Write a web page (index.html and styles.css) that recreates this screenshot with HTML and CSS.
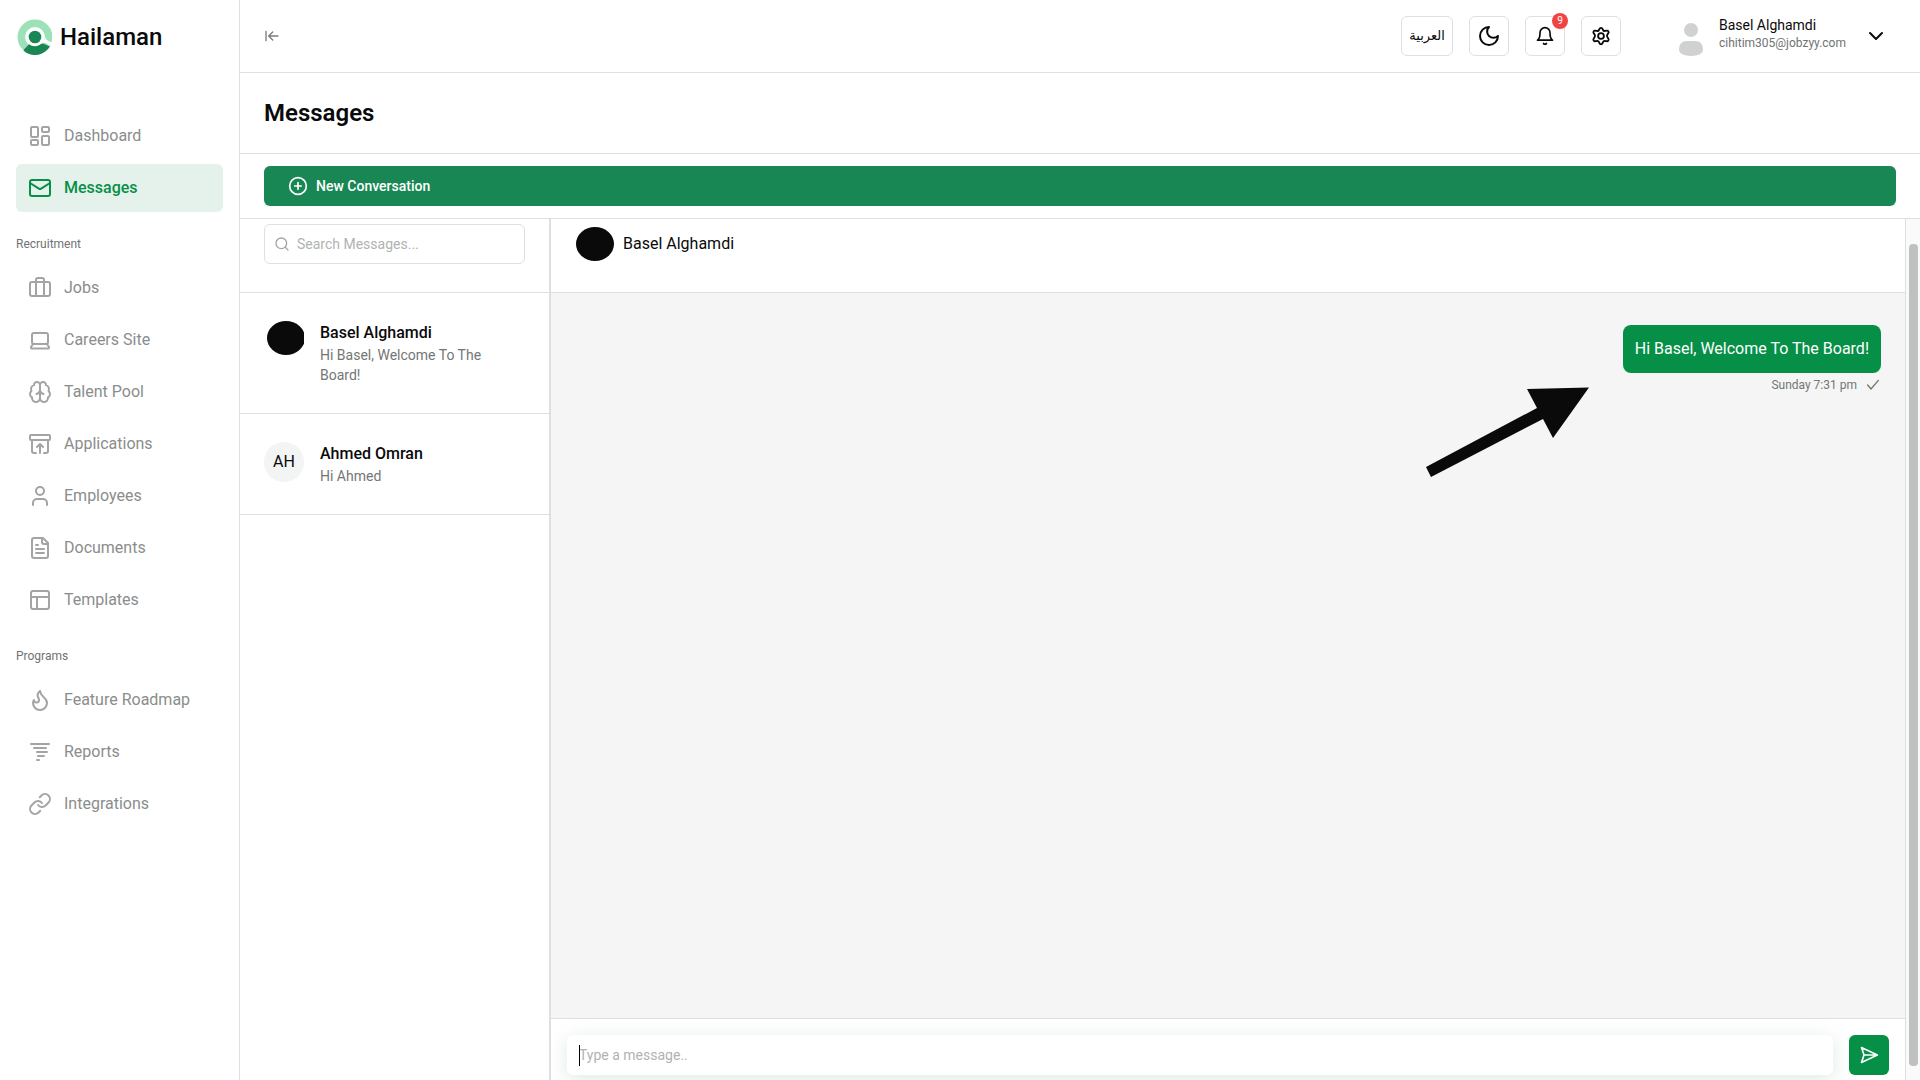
FILE: index.html
```html
<!DOCTYPE html>
<html lang="en">
<head>
  <meta charset="UTF-8">
  <meta name="viewport" content="width=device-width, initial-scale=1.0">
  <title>Hailaman - Messages</title>
  <link rel="stylesheet" href="styles.css">
</head>
<body>
  <div class="app">
    <aside class="sidebar">
      <a class="brand" href="#">
        <svg class="brand-logo" viewBox="-1 0 36 36">
          <circle cx="18" cy="18" r="13.7" fill="none" stroke="#9de1b9" stroke-width="7.6"/>
          <path d="M6.3 31.2 12 25.2c3.400 2.700 9 2.600 12.300-.4.900-.7 1.700-.4 2.800.2l5.800 2.500C26 38.200 13 38.200 6.300 31.200Z" fill="#198754"/>
          <path d="M25.500 24.500c1.800-1.600 3.500-.2 7.200 2.200l3.500-3.700c-4.500-.3-7-1.500-8-4.500Z" fill="#fff"/>
          <circle cx="18" cy="18" r="6.300" fill="#198754"/>
        </svg>
        <span>Hailaman</span>
      </a>

      <nav class="nav">
        <a class="nav-item" href="#">
          <svg class="icon" viewBox="0 0 24 24"><rect x="3" y="3" width="7" height="10" rx="1"/><rect x="14" y="3" width="7" height="5" rx="1"/><rect x="14" y="12" width="7" height="9" rx="1"/><rect x="3" y="16" width="7" height="5" rx="1"/></svg>
          <span>Dashboard</span>
        </a>
        <a class="nav-item active" href="#">
          <svg class="icon" viewBox="0 0 24 24"><rect x="2" y="4" width="20" height="16" rx="2"/><path d="m2 7 8.900 5.700a2 2 0 0 0 2.200 0L22 7"/></svg>
          <span>Messages</span>
        </a>

        <h2 class="nav-label">Recruitment</h2>
        <a class="nav-item" href="#">
          <svg class="icon" viewBox="0 0 24 24"><rect x="2" y="6" width="20" height="14" rx="2"/><path d="M8 20V4a2 2 0 0 1 2-2h4a2 2 0 0 1 2 2v16"/></svg>
          <span>Jobs</span>
        </a>
        <a class="nav-item" href="#">
          <svg class="icon" viewBox="0 0 24 24"><rect x="4" y="5" width="16" height="11" rx="2"/><path d="M5 16h14l2 3a1 1 0 0 1-1 1.500H4A1 1 0 0 1 3 19Z"/></svg>
          <span>Careers Site</span>
        </a>
        <a class="nav-item" href="#">
          <svg class="icon" viewBox="0 0 24 24"><path d="M12 5a3 3 0 1 0-5.997.125 4 4 0 0 0-2.526 5.770 4 4 0 0 0 .556 6.588A4 4 0 1 0 12 18Z"/><path d="M12 5a3 3 0 1 1 5.997.125 4 4 0 0 1 2.526 5.770 4 4 0 0 1-.556 6.588A4 4 0 1 1 12 18Z"/><path d="M8.500 14c2-.5 3-1.500 3.500-3.500.500 2 1.500 3 3.500 3.500"/></svg>
          <span>Talent Pool</span>
        </a>
        <a class="nav-item" href="#">
          <svg class="icon" viewBox="0 0 24 24"><rect x="2" y="3" width="20" height="5" rx="1"/><path d="M4 8v11a2 2 0 0 0 2 2h2M20 8v11a2 2 0 0 1-2 2h-2M9 15l3-3 3 3M12 12v9"/></svg>
          <span>Applications</span>
        </a>
        <a class="nav-item" href="#">
          <svg class="icon" viewBox="0 0 24 24"><circle cx="12" cy="7" r="4"/><path d="M19 21v-2a4 4 0 0 0-4-4H9a4 4 0 0 0-4 4v2"/></svg>
          <span>Employees</span>
        </a>
        <a class="nav-item" href="#">
          <svg class="icon" viewBox="0 0 24 24"><path d="M15 2H6a2 2 0 0 0-2 2v16a2 2 0 0 0 2 2h12a2 2 0 0 0 2-2V7Z"/><path d="M14 2v4a2 2 0 0 0 2 2h4M10 9H8M16 13H8M16 17H8"/></svg>
          <span>Documents</span>
        </a>
        <a class="nav-item" href="#">
          <svg class="icon" viewBox="0 0 24 24"><rect x="3" y="3" width="18" height="18" rx="2"/><path d="M3 9h18M9 21V9"/></svg>
          <span>Templates</span>
        </a>

        <h2 class="nav-label">Programs</h2>
        <a class="nav-item" href="#">
          <svg class="icon" viewBox="0 0 24 24"><path d="M8.500 14.500A2.500 2.500 0 0 0 11 12c0-1.380-.5-2-1-3-1.072-2.143-.224-4.054 2-6 .5 2.500 2 4.900 4 6.500 2 1.600 3 3.500 3 5.500a7 7 0 1 1-14 0c0-1.153.433-2.294 1-3a2.500 2.500 0 0 0 2.500 2.500z"/></svg>
          <span>Feature Roadmap</span>
        </a>
        <a class="nav-item" href="#">
          <svg class="icon" viewBox="0 0 24 24"><path d="M3 4h18M6 8h12M9 12h10M10 16h6M9 20h2"/></svg>
          <span>Reports</span>
        </a>
        <a class="nav-item" href="#">
          <svg class="icon" viewBox="0 0 24 24"><path d="M10 13a5 5 0 0 0 7.540.54l3-3a5 5 0 0 0-7.070-7.070l-1.720 1.710"/><path d="M14 11a5 5 0 0 0-7.540-.54l-3 3a5 5 0 0 0 7.070 7.070l1.710-1.710"/></svg>
          <span>Integrations</span>
        </a>
      </nav>
    </aside>

    <main class="main">
      <header class="topbar">
        <button class="collapse" aria-label="Collapse sidebar">
          <svg class="icon" viewBox="0 0 24 24"><path d="M3 19V5M13 6l-6 6 6 6M7 12h14"/></svg>
        </button>
        <div class="tools">
          <button class="tool lang" lang="ar">العربية</button>
          <button class="tool" aria-label="Dark mode">
            <svg class="icon" viewBox="0 0 24 24"><path d="M12 3a6 6 0 0 0 9 9 9 9 0 1 1-9-9Z"/></svg>
          </button>
          <button class="tool" aria-label="Notifications">
            <svg class="icon small" viewBox="0 0 24 24"><path d="M6 8a6 6 0 0 1 12 0c0 7 3 9 3 9H3s3-2 3-9M10.300 21a2 2 0 0 0 3.400 0"/></svg>
            <span class="badge">9</span>
          </button>
          <button class="tool" aria-label="Settings">
            <svg class="icon small" viewBox="1 1 22 22"><path d="M10.300 3.200a1.800 1.800 0 0 1 3.400 0l.5 1.200a1.900 1.900 0 0 0 2.200 1l1.500-.2a1.800 1.800 0 0 1 2 2.900l-.9 1.300a2.500 2.500 0 0 0 0 2.800l1 1.500a1.900 1.900 0 0 1-2 3l-1.500-.2a1.900 1.900 0 0 0-2.200 1l-.6 1.400a1.800 1.800 0 0 1-3.400 0l-.6-1.400a1.900 1.900 0 0 0-2.200-1l-1.500.2a1.900 1.900 0 0 1-2-3l1-1.500a2.500 2.500 0 0 0 0-2.800l-.9-1.300a1.800 1.800 0 0 1 2-2.900l1.500.2a1.900 1.900 0 0 0 2.200-1Z" transform="translate(0 1)"/><circle cx="12" cy="12" r="3.200"/></svg>
          </button>
          <button class="profile">
            <svg class="profile-photo" viewBox="0 0 40 40"><circle cx="20" cy="14" r="7"/><path d="M8 34c0-6 3-9 8-9h8c5 0 8 3 8 9 0 3-5 6-12 6S8 37 8 34Z"/></svg>
            <span class="profile-text">
              <span class="profile-name">Basel Alghamdi</span>
              <span class="profile-email">cihitim305@jobzyy.com</span>
            </span>
            <svg class="icon" viewBox="0 0 24 24"><path d="m6 9 6 6 6-6"/></svg>
          </button>
        </div>
      </header>

      <div class="page-title">
        <h1>Messages</h1>
      </div>

      <div class="actions">
        <button class="new-conversation">
          <svg class="icon small" viewBox="0 0 24 24"><circle cx="12" cy="12" r="10"/><path d="M8 12h8M12 8v8"/></svg>
          <span>New Conversation</span>
        </button>
      </div>

      <div class="messenger">
        <section class="conversations">
          <div class="search">
            <label class="search-box">
              <svg class="icon" viewBox="0 0 24 24"><circle cx="11" cy="11" r="8"/><path d="m21 21-4.300-4.300"/></svg>
              <input type="text" placeholder="Search Messages..." aria-label="Search Messages">
            </label>
          </div>
          <a class="conversation" href="#">
            <svg class="avatar" viewBox="0 0 40 40"><ellipse cx="22" cy="17" rx="19" ry="17"/></svg>
            <span class="conversation-text">
              <span class="conversation-name">Basel Alghamdi</span>
              <span class="conversation-preview">Hi Basel, Welcome To The Board!</span>
            </span>
          </a>
          <a class="conversation" href="#">
            <span class="avatar initials">AH</span>
            <span class="conversation-text">
              <span class="conversation-name">Ahmed Omran</span>
              <span class="conversation-preview">Hi Ahmed</span>
            </span>
          </a>
        </section>

        <section class="chat">
          <div class="chat-header">
            <svg class="avatar" viewBox="0 0 40 40"><ellipse cx="20" cy="20" rx="19" ry="17"/></svg>
            <span>Basel Alghamdi</span>
          </div>
          <div class="chat-body">
            <div class="message">Hi Basel, Welcome To The Board!</div>
            <div class="message-meta">
              <span>Sunday 7:31 pm</span>
              <svg class="icon" viewBox="0 0 24 24"><path d="M20 5 9 18l-5-6"/></svg>
            </div>
            <svg class="pointer" viewBox="0 0 168 94"><path d="M103 3 165 1.500 129 52l-10-19L7 91 2 81 113 22Z"/></svg>
          </div>
          <form class="composer">
            <div class="composer-field">
              <span class="caret"></span>
              <input type="text" placeholder="Type a message.." aria-label="Message">
            </div>
            <button class="send" type="button" aria-label="Send">
              <svg class="icon small" viewBox="0 0 24 24"><path d="m3 3 3 9-3 9 19-9ZM6 12h16"/></svg>
            </button>
          </form>
        </section>

        <div class="scroll-track">
          <div class="scroll-thumb"></div>
        </div>
      </div>
    </main>
  </div>
</body>
</html>
```

FILE: styles.css
```css
* {
  box-sizing: border-box;
}

body {
  margin: 0;
  font-family: Roboto, "Noto Sans", sans-serif;
  font-size: 16px;
  line-height: 24px;
  color: #0a0a0a;
  background-color: #fff;
}

a {
  color: inherit;
  text-decoration: none;
}

button,
input {
  font: inherit;
  color: inherit;
  padding: 0;
  border: none;
  background: none;
}

button {
  cursor: pointer;
}

h1,
h2 {
  margin: 0;
}

.app {
  display: flex;
  height: 100vh;
}

.icon {
  width: 24px;
  height: 24px;
  flex: none;
  fill: none;
  stroke: currentColor;
  stroke-width: 2;
  stroke-linecap: round;
  stroke-linejoin: round;
}

.icon.small {
  width: 20px;
  height: 20px;
}

/* Sidebar */
.sidebar {
  flex: 0 0 240px;
  padding: 0 16px;
  border-right: 1px solid #dedfe3;
}

.brand {
  display: flex;
  align-items: center;
  gap: 8px;
  height: 73px;
  font-size: 24px;
  font-weight: 500;
}

.brand-logo {
  width: 36px;
  height: 36px;
}

.nav {
  display: flex;
  flex-direction: column;
  gap: 4px;
  padding-top: 39px;
}

.nav-item {
  display: flex;
  align-items: center;
  gap: 12px;
  height: 48px;
  padding: 0 12px;
  border-radius: 6px;
  color: #8a8d8c;
}

.nav-item .icon {
  color: #a3a5a4;
}

.nav-item.active,
.nav-item.active .icon {
  color: #058f47;
}

.nav-item.active {
  background-color: #e5f2eb;
  font-weight: 500;
}

.nav-label {
  height: 44px;
  padding-top: 16px;
  font-size: 12px;
  font-weight: 400;
  color: #6f7372;
}

/* Top bar */
.main {
  flex: 1;
  min-width: 0;
  display: flex;
  flex-direction: column;
}

.topbar {
  display: flex;
  align-items: center;
  justify-content: space-between;
  height: 73px;
  padding: 0 32px 0 24px;
  border-bottom: 1px solid #dedfe3;
}

.collapse {
  display: flex;
  color: #7a7c80;
}

.collapse .icon {
  width: 16px;
  height: 20px;
}

.tools {
  display: flex;
  align-items: center;
  gap: 16px;
}

.tool {
  position: relative;
  display: flex;
  align-items: center;
  justify-content: center;
  width: 40px;
  height: 40px;
  border: 1px solid #dedfe3;
  border-radius: 6px;
}

.tool.lang {
  width: 52px;
  font-family: "DejaVu Sans", sans-serif;
  font-size: 13px;
}

.badge {
  position: absolute;
  top: -4px;
  right: -4px;
  width: 16px;
  height: 16px;
  border-radius: 50%;
  background-color: #ef4444;
  color: #fff;
  font-size: 10px;
  line-height: 16px;
}

.profile {
  display: flex;
  align-items: center;
  margin-left: 32px;
  text-align: left;
}

.profile-photo {
  width: 40px;
  height: 40px;
  margin: 0 8px 0 2px;
  fill: #d0d2d1;
}

.profile-text {
  display: flex;
  flex-direction: column;
  min-width: 129px;
  margin-right: 16px;
  padding-bottom: 4px;
  line-height: 18px;
}

.profile-name {
  font-size: 14px;
}

.profile-email {
  font-size: 12px;
  color: #6f7372;
}

/* Page heading */
.page-title {
  padding: 24px;
  border-bottom: 1px solid #dedfe3;
}

.page-title h1 {
  font-size: 24px;
  line-height: 32px;
  font-weight: 600;
}

.actions {
  padding: 12px 24px;
  border-bottom: 1px solid #dedfe3;
}

.new-conversation {
  display: flex;
  align-items: center;
  gap: 8px;
  width: 100%;
  height: 40px;
  padding: 0 24px;
  border-radius: 6px;
  background-color: #198754;
  color: #fff;
  font-size: 14px;
  font-weight: 500;
}

/* Messenger */
.messenger {
  flex: 1;
  min-height: 0;
  display: flex;
}

.conversations {
  flex: 0 0 311px;
  border-right: 2px solid #dedfe3;
}

.search {
  padding: 5px 24px 28px;
  border-bottom: 1px solid #dedfe3;
}

.search-box {
  display: flex;
  align-items: center;
  gap: 7px;
  height: 40px;
  padding: 0 9px;
  border: 1px solid #dedfe3;
  border-radius: 6px;
}

.search-box .icon {
  width: 16px;
  height: 16px;
  color: #a3a5a4;
}

.search-box input,
.composer input {
  flex: 1;
  min-width: 0;
  font-size: 14px;
  outline: none;
}

.search-box input::placeholder,
.composer input::placeholder {
  color: #b0b3b2;
}

.conversation {
  display: flex;
  gap: 16px;
  padding: 28px 48px 28px 24px;
  border-bottom: 1px solid #dedfe3;
}

.avatar {
  flex: none;
  width: 40px;
  height: 40px;
  border-radius: 50%;
  fill: #0a0a0a;
}

svg.avatar {
  border-radius: 0;
}

.initials {
  display: flex;
  align-items: center;
  justify-content: center;
  background-color: #f2f5f4;
}

.conversation-text {
  display: flex;
  flex-direction: column;
}

.conversation-name {
  font-weight: 500;
}

.conversation-preview {
  font-size: 14px;
  line-height: 20px;
  color: #737675;
}

.chat {
  flex: 1;
  min-width: 0;
  display: flex;
  flex-direction: column;
  border-right: 1px solid #dedfe3;
}

.chat-header {
  display: flex;
  align-items: center;
  gap: 8px;
  padding: 5px 24px 28px;
  border-bottom: 1px solid #dedfe3;
}

.chat-body {
  position: relative;
  flex: 1;
  display: flex;
  flex-direction: column;
  align-items: flex-end;
  padding: 32px 24px;
  background-color: #f5f5f5;
}

.message {
  padding: 12px;
  border-radius: 8px;
  background-color: #058f47;
  color: #fff;
}

.message-meta {
  display: flex;
  align-items: center;
  gap: 8px;
  font-size: 12px;
  color: #737675;
}

.message-meta .icon {
  width: 16px;
  height: 16px;
}

.pointer {
  position: absolute;
  top: 93px;
  right: 313px;
  width: 168px;
  height: 94px;
  fill: #0a0a0a;
}

.composer {
  display: flex;
  gap: 16px;
  padding: 16px 16px 5px;
  border-top: 1px solid #dedfe3;
  overflow: hidden;
}

.composer-field {
  position: relative;
  flex: 1;
  display: flex;
  padding: 0 12px;
  border-radius: 6px;
  background-color: #fff;
  box-shadow: 0 4px 20px rgba(0, 110, 70, 0.14);
}

.caret {
  position: absolute;
  top: 10px;
  left: 12px;
  width: 1px;
  height: 21px;
  background-color: #000;
}

.send {
  display: flex;
  align-items: center;
  justify-content: center;
  width: 40px;
  height: 40px;
  border-radius: 6px;
  background-color: #058f47;
  color: #fff;
}

.scroll-track {
  flex: 0 0 14px;
  padding: 25px 2px 14px 3px;
  background-color: #fafafa;
}

.scroll-thumb {
  height: 100%;
  border-radius: 4px;
  background-color: #bfc0c0;
}
```
